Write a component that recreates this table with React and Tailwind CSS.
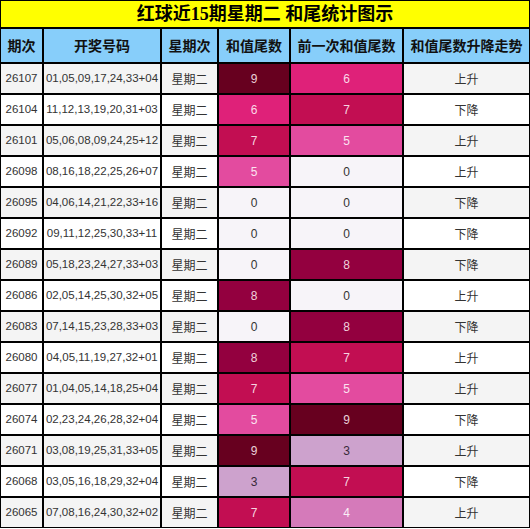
import React from 'react';

const rows = [
  ['26107', '01,05,09,17,24,33+04', 9, 6, '上升'],
  ['26104', '11,12,13,19,20,31+03', 6, 7, '下降'],
  ['26101', '05,06,08,09,24,25+12', 7, 5, '上升'],
  ['26098', '08,16,18,22,25,26+07', 5, 0, '上升'],
  ['26095', '04,06,14,21,22,33+16', 0, 0, '下降'],
  ['26092', '09,11,12,25,30,33+11', 0, 0, '下降'],
  ['26089', '05,18,23,24,27,33+03', 0, 8, '下降'],
  ['26086', '02,05,14,25,30,32+05', 8, 0, '上升'],
  ['26083', '07,14,15,23,28,33+03', 0, 8, '下降'],
  ['26080', '04,05,11,19,27,32+01', 8, 7, '上升'],
  ['26077', '01,04,05,14,18,25+04', 7, 5, '上升'],
  ['26074', '02,23,24,26,28,32+04', 5, 9, '下降'],
  ['26071', '03,08,19,25,31,33+05', 9, 3, '上升'],
  ['26068', '03,05,16,18,29,32+04', 3, 7, '下降'],
  ['26065', '07,08,16,24,30,32+02', 7, 4, '上升'],
];

// PuRd scale stretched over 0..9
const tailColors = {
  0: 'bg-[#f7f4f9] text-[#333]',
  1: 'bg-[#ebe4f1] text-[#333]',
  2: 'bg-[#dcc8e3] text-[#333]',
  3: 'bg-[#cda2cd] text-[#3a2a3a]',
  4: 'bg-[#d57aba] text-[#fbeef6]',
  5: 'bg-[#e34b9f] text-[#fbe3f0]',
  6: 'bg-[#df2179] text-[#fbd9e8]',
  7: 'bg-[#c20e52] text-[#f6d4e0]',
  8: 'bg-[#93003f] text-[#f0d0dc]',
  9: 'bg-[#67001f] text-[#ead0d8]',
};

const cell = 'border border-black flex items-center justify-center';
const cjk = "font-['Noto_Sans_CJK_SC',sans-serif]";
const num = "font-['Liberation_Sans','Noto_Sans_CJK_SC',sans-serif]";

const headers = ['期次', '开奖号码', '星期次', '和值尾数', '前一次和值尾数', '和值尾数升降走势'];

export default function App() {
  return (
    <div className="w-[530px] bg-white">
      <div className="grid grid-cols-[43px_118px_57px_72px_113px_127px]">
        <div className={`col-span-6 h-[28px] bg-[#ffff00] ${cell} font-['Liberation_Serif','Noto_Sans_CJK_SC',serif] text-[18px] font-bold text-black`}>
          红球近15期星期二 和尾统计图示
        </div>

        {headers.map((h) => (
          <div key={h} className={`h-[35px] bg-[#87cefa] ${cell} ${cjk} text-[14px] font-bold text-[#111]`}>
            {h}
          </div>
        ))}

        {rows.map(([issue, balls, cur, prev, trend], i) => {
          const bg = i % 2 === 0 ? 'bg-[#f4f4f4]' : 'bg-white';
          return (
            <React.Fragment key={issue}>
              <div className={`h-[31px] ${bg} ${cell} ${num} text-[11.5px] text-[#333]`}>{issue}</div>
              <div className={`h-[31px] ${bg} ${cell} ${num} text-[11.5px] text-[#333]`}>{balls}</div>
              <div className={`h-[31px] ${bg} ${cell} ${cjk} text-[12px] text-[#333]`}>星期二</div>
              <div className={`h-[31px] ${tailColors[cur]} ${cell} ${num} text-[12px]`}>{cur}</div>
              <div className={`h-[31px] ${tailColors[prev]} ${cell} ${num} text-[12px]`}>{prev}</div>
              <div className={`h-[31px] ${bg} ${cell} ${cjk} text-[12px] text-[#333]`}>{trend}</div>
            </React.Fragment>
          );
        })}
      </div>
    </div>
  );
}
